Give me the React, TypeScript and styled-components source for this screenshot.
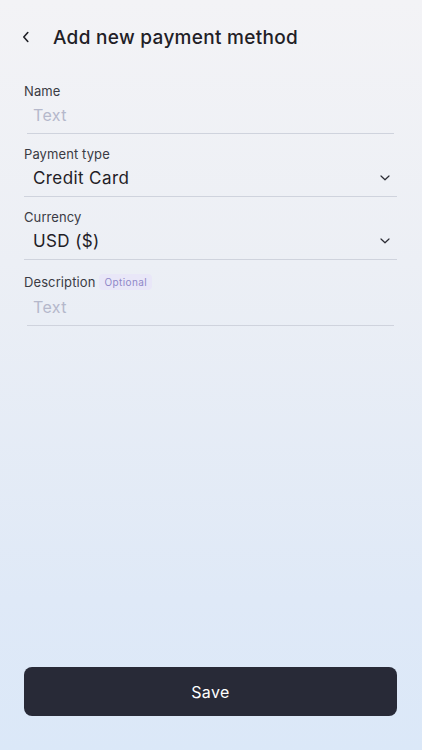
import React from "react";
import styled, {createGlobalStyle} from "styled-components";

const GlobalStyle = createGlobalStyle`
  html, body {
    margin: 0;
    padding: 0;
  }
  body {
    font-family: Inter, "Noto Sans", sans-serif;
  }
`;

type FieldProps = {
  label: string,
  value?: string,
  placeholder?: string,
  optional?: boolean,
  select?: boolean,
};

const FormField: React.FC<FieldProps> = ({label, value, placeholder, optional, select}) => (
  <FieldBlock>
    <LabelRow $tall={optional}>
      <Label>{label}</Label>
      {optional && <Badge>Optional</Badge>}
    </LabelRow>
    <InputRow $select={select}>
      <Value $empty={!value}>{value || placeholder}</Value>
      {select && (
        <svg width="10" height="6" viewBox="0 0 10 6" fill="none">
          <path d="M1 1l4 3.8L9 1" stroke="#2a2b33" strokeWidth="1.2" strokeLinecap="round" strokeLinejoin="round"/>
        </svg>
      )}
    </InputRow>
  </FieldBlock>
);

export default function App() {
  return (
    <Screen>
      <GlobalStyle/>
      <Header>
        <BackButton aria-label="Back">
          <svg width="10" height="14" viewBox="0 0 10 14" fill="none">
            <path d="M6.8 2.5 2.8 7l4 4.5" stroke="#1f2026" strokeWidth="1.6" strokeLinecap="round" strokeLinejoin="round"/>
          </svg>
        </BackButton>
        <Title>Add new payment method</Title>
      </Header>

      <Form>
        <FormField label="Name" placeholder="Text"/>
        <FormField label="Payment type" value="Credit Card" select/>
        <FormField label="Currency" value="USD ($)" select/>
        <FormField label="Description" placeholder="Text" optional/>
      </Form>

      <Footer>
        <SaveButton>Save</SaveButton>
      </Footer>
    </Screen>
  );
}

const Screen = styled.div`
  width: 422px;
  height: 750px;
  box-sizing: border-box;
  background: linear-gradient(180deg, #f3f3f6 0%, #eceff5 35%, #dfe9f7 80%, #dbe8f8 100%);
  display: flex;
  flex-direction: column;
  overflow: hidden;
`;

const Header = styled.header`
  height: 74px;
  padding: 0 0 0 18px;
  display: flex;
  align-items: center;
  gap: 19px;
`;

const BackButton = styled.button`
  width: 16px;
  height: 20px;
  padding: 0;
  border: none;
  background: none;
  display: flex;
  align-items: center;
  justify-content: center;
`;

const Title = styled.h1`
  margin: 0;
  font-size: 19px;
  font-weight: 500;
  color: #1f2026;
  letter-spacing: 0.3px;
`;

const Form = styled.div`
  flex: 1 0 auto;
  padding: 8px 25px 0 24px;
  display: flex;
  flex-direction: column;
  gap: 11px;
`;

const FieldBlock = styled.div`
  display: flex;
  flex-direction: column;
`;

const LabelRow = styled.div<{$tall?: boolean}>`
  box-sizing: border-box;
  height: ${p => p.$tall ? '21px' : '18px'};
  padding-top: ${p => p.$tall ? '1px' : '0'};
  display: flex;
  align-items: center;
  gap: 4px;
`;

const Label = styled.label`
  font-size: 13px;
  color: #3a3b44;
  letter-spacing: 0.1px;
`;

const Badge = styled.span`
  padding: 1px 5px;
  border-radius: 4px;
  background: #e9e7f8;
  color: #8f88c8;
  font-size: 10px;
  line-height: 14px;
  letter-spacing: 0.4px;
`;

const InputRow = styled.div<{$select?: boolean}>`
  height: 34px;
  box-sizing: border-box;
  margin: ${p => p.$select ? '0' : '0 3px 0 3px'};
  padding: ${p => p.$select ? '0 7px 4px 9px' : '0 4px 4px 6px'};
  border-bottom: 1px solid #cfd3dd;
  display: flex;
  align-items: center;
  justify-content: space-between;
`;

const Value = styled.span<{$empty?: boolean}>`
  font-size: ${p => p.$empty ? '16px' : '17px'};
  color: ${p => p.$empty ? '#b5b8cb' : '#1f2026'};
  letter-spacing: 0.4px;
`;

const Footer = styled.div`
  padding: 0 25px 34px 24px;
`;

const SaveButton = styled.button`
  width: 100%;
  height: 49px;
  border: none;
  border-radius: 8px;
  background: #282a37;
  color: #ffffff;
  font-family: Inter, "Noto Sans", sans-serif;
  font-size: 16px;
  font-weight: 400;
  letter-spacing: 0.4px;
`;
